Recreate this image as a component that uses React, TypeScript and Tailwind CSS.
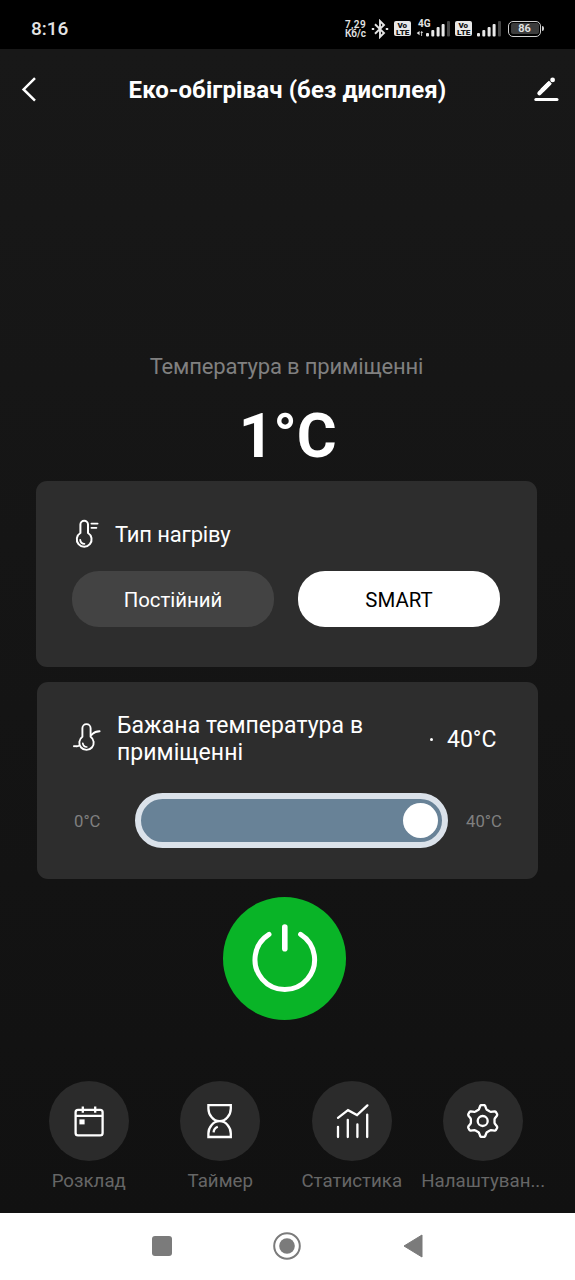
import React from 'react';

interface IconProps {
  className?: string;
}

const BackIcon: React.FC<IconProps> = ({ className = '' }) => (
  <svg viewBox="0 0 16 26" className={className} fill="none" stroke="white" strokeWidth="2.5">
    <path d="M14 1.2 2.6 12.4 14 23.6" />
  </svg>
);

const EditIcon: React.FC<IconProps> = ({ className = '' }) => (
  <svg viewBox="0 0 26 26" className={className} fill="none" stroke="white" strokeLinecap="round">
    <path d="M5.4 16.2 14.8 6.8" strokeWidth="4.2" />
    <path d="M8 13.6 16.4 5.2" strokeWidth="4.2" strokeLinecap="butt" />
    <circle cx="18.6" cy="2.9" r="2.4" fill="white" stroke="none" />
    <path d="M1.8 22.5H23" strokeWidth="3" />
  </svg>
);

const BluetoothIcon: React.FC<IconProps> = ({ className = '' }) => (
  <svg viewBox="0 0 18 20" className={className} fill="none" stroke="#e4e4e4" strokeWidth="1.9">
    <path d="M4 5.2 13 14 9 18V2L13 6 4 14.8" />
    <path d="M.8 10H3.2M14.8 10H17.2" strokeWidth="2.2" />
  </svg>
);

const VolteBadge: React.FC = () => (
  <svg viewBox="0 0 17 15" className="h-[15px] w-[17px] shrink-0">
    <rect width="17" height="15" rx="2" fill="#e8e8e8" />
    <text x="3.4" y="7" fontSize="8" fontWeight="900" fill="#111">Vo</text>
    <text x="2" y="13.8" fontSize="7.8" fontWeight="900" fill="#111" textLength="13.4" lengthAdjust="spacingAndGlyphs">LTE</text>
  </svg>
);

const SignalBars: React.FC<IconProps> = ({ className = '' }) => (
  <svg viewBox="0 0 24 16" className={className}>
    <g fill="#e8e8e8">
      <rect x="0" y="12" width="3" height="3.5" rx="1" />
      <rect x="5.3" y="9" width="3" height="6.5" rx="1" />
      <rect x="10.6" y="6" width="3" height="9.5" rx="1" />
      <rect x="15.6" y="3" width="3" height="12.5" rx="1" />
    </g>
    <rect x="21" y="0" width="3" height="15.5" rx="1" fill="#454545" />
  </svg>
);

const HeatTypeIcon: React.FC<IconProps> = ({ className = '' }) => (
  <svg viewBox="0 0 24 30" className={className} fill="none" stroke="white" strokeWidth="2" strokeLinecap="round">
    <path d="M5.4 5.6a3.8 3.8 0 0 1 7.6 0V14a7.4 7.4 0 1 1-7.6 0Z" strokeLinejoin="round" />
    <path d="M5.2 20.8a4.4 4.4 0 0 0 4.2 4" strokeWidth="1.8" />
    <path d="M16.4 4.6H22.6M16.4 8.8H21.4" strokeWidth="1.8" />
  </svg>
);

const TargetTempIcon: React.FC<IconProps> = ({ className = '' }) => (
  <svg viewBox="0 0 28 30" className={className} fill="none" stroke="white" strokeWidth="1.9" strokeLinecap="round">
    <path d="M9.4 5.2a4.1 4.1 0 0 1 8.2 0V13.8a7.2 7.2 0 1 1-8.2 0Z" strokeLinejoin="round" />
    <path d="M9.8 20.4a4.2 4.2 0 0 0 4 3.6" strokeWidth="1.7" />
    <path d="M1 23.2C3 22.8 4.8 24 6.6 22.4M18.4 12C20.4 10.4 20.6 8.4 26.6 8.2" />
  </svg>
);

const PowerIcon: React.FC<IconProps> = ({ className = '' }) => (
  <svg viewBox="0 0 70 70" className={className} fill="none" stroke="white" strokeWidth="5" strokeLinecap="round">
    <path d="M19 10.4A29.8 29.8 0 1 0 50.6 10.4" />
    <path d="M34.8 3V24.8" strokeWidth="5.6" />
  </svg>
);

const CalendarIcon: React.FC = () => (
  <svg viewBox="0 0 36 36" className="size-9" fill="none" stroke="white" strokeWidth="2.3">
    <rect x="4.6" y="6.8" width="27" height="25.6" rx="2.4" />
    <path d="M4.4 12.8H32M11.8 3.6V9.8M24.2 3.6V9.8" />
    <rect x="8.4" y="16.4" width="5.2" height="5" fill="white" stroke="none" />
  </svg>
);

const HourglassIcon: React.FC = () => (
  <svg viewBox="0 0 36 36" className="size-9" fill="none" stroke="white" strokeWidth="2.3">
    <path d="M6.4 2.2H28.8V5.4C28.8 12 23.8 18.2 17.6 18.2S6.4 12 6.4 5.4ZM6.4 34H28.8V30.4C28.8 24 23.8 18.2 17.6 18.2S6.4 24 6.4 30.4Z" />
    <path d="M11.6 29.4C11.8 26.6 13.2 24.8 15.8 23.8" />
  </svg>
);

const StatsIcon: React.FC = () => (
  <svg viewBox="0 0 36 36" className="size-9" fill="none" stroke="white" strokeWidth="2.3" strokeLinecap="round">
    <path d="M4 14.8 14 7.2 23 12 33.4 2.4" />
    <path d="M4 23.8V34M13.8 16.8V34M23.4 21.4V34M33.2 11.6V34" />
  </svg>
);

// one gear tooth as [degrees, radius], repeated six times
const tooth = [
  [-23, 11.9],
  [-18, 12.3],
  [-13, 13.8],
  [-9, 15.4],
  [-5, 16],
  [5, 16],
  [9, 15.4],
  [13, 13.8],
  [18, 12.3],
  [23, 11.9],
];

const gearPoints = Array.from({ length: 6 }, (_, i) =>
  tooth.map(([deg, r]) => {
    const a = ((deg + i * 60) * Math.PI) / 180;
    return `${(17.7 + r * Math.sin(a)).toFixed(2)},${(18 - r * Math.cos(a)).toFixed(2)}`;
  })
)
  .flat()
  .join(' ');

const SettingsIcon: React.FC = () => (
  <svg viewBox="0 0 36 36" className="size-9" fill="none" stroke="white" strokeWidth="2.3" strokeLinejoin="round">
    <polygon points={gearPoints} />
    <circle cx="17.7" cy="18" r="5" />
  </svg>
);

const actions = [
  { label: 'Розклад', Icon: CalendarIcon },
  { label: 'Таймер', Icon: HourglassIcon },
  { label: 'Статистика', Icon: StatsIcon },
  { label: 'Налаштуван...', Icon: SettingsIcon },
];

const StatusBar: React.FC = () => (
  <div className="flex h-[49px] items-center bg-black pt-2 pr-[34px] pl-[31px] text-[#e4e4e4]">
    <span className="text-[19px] leading-none font-medium">8:16</span>
    <div className="ml-auto flex items-center">
      <div className="mr-[4px] w-[22px] text-[10px] leading-[9px] font-semibold whitespace-nowrap">
        <div className="tracking-[0.4px]">7,29</div>
        <div>Кб/с</div>
      </div>
      <BluetoothIcon className="mr-[5px] h-[20px] w-[18px]" />
      <VolteBadge />
      <div className="ml-[5px] flex h-[17px] items-end">
        <div className="relative z-10 -mr-[7px] h-[17px] w-[17px]">
          <span className="block pl-[2px] text-[10px] leading-[8px] font-bold">4G</span>
          <svg viewBox="0 0 8 6" className="mt-[3px] h-[5px] w-[8px]" fill="#e4e4e4">
            <path d="M0 2.5 3.5 0V5ZM8 2 6 0 4.5 2H5.5V6H6.5V2Z" />
          </svg>
        </div>
        <SignalBars className="h-[16px] w-[24px]" />
      </div>
      <div className="w-[5px]" />
      <VolteBadge />
      <SignalBars className="mr-[7px] ml-[5px] h-[16px] w-[24px]" />
      <div className="flex h-[16px] w-[33px] items-center justify-center rounded-[5px] border-[1.5px] border-[#cfcfcf] p-[1.5px]">
        <div className="flex h-full w-full items-center justify-center rounded-[2px] bg-[#3c3c3c] text-[11px] leading-none font-semibold">
          86
        </div>
      </div>
      <div className="-mr-[3px] ml-px h-[5px] w-[2px] rounded-r-full bg-[#cfcfcf]" />
    </div>
  </div>
);

const App: React.FC = () => {
  return (
    <div className="flex h-[1280px] w-[575px] flex-col overflow-hidden bg-[#141414] font-['Roboto','Noto_Sans',sans-serif] text-white">
      <StatusBar />

      <main className="flex h-[1164px] flex-col bg-linear-to-b from-[#181818] to-[#111111]">
        <header className="flex h-[81px] items-center justify-between pr-[15px] pl-[21px]">
          <BackIcon className="h-[26px] w-[16px]" />
          <h1 className="pl-[4px] text-[24px] leading-none font-bold tracking-[0.1px] whitespace-nowrap">
            Еко-обігрівач (без дисплея)
          </h1>
          <EditIcon className="size-[26px] overflow-visible" />
        </header>

        <section className="mt-[222px] flex h-[129px] flex-col items-center">
          <p className="pr-[2px] text-[22px] leading-[30px] tracking-[-0.17px] whitespace-nowrap text-[#808080]">
            Температура в приміщенні
          </p>
          <p className="mt-[17px] text-[61px] leading-[74px] font-bold tracking-[-0.4px]">1°C</p>
        </section>

        <section className="ml-[36px] h-[186px] w-[501px] rounded-[11px] bg-[#2d2d2d] px-[36px] pt-[36px]">
          <div className="flex h-[34px] items-center">
            <HeatTypeIcon className="ml-[3px] h-[30px] w-[24px]" />
            <h2 className="ml-[16px] pt-[2px] text-[22px] leading-none tracking-[-0.15px]">Тип нагріву</h2>
          </div>
          <div className="mt-[20px] flex gap-[24px]">
            <button className="h-[56px] w-[202px] rounded-[27px] bg-[#434343] pt-[2px] text-[20.4px]">Постійний</button>
            <button className="h-[56px] w-[202px] rounded-[27px] bg-white pt-[2px] text-[20.4px] text-black">SMART</button>
          </div>
        </section>

        <section className="mt-[15px] ml-[37px] h-[197px] w-[501px] rounded-[11px] bg-[#2d2d2d] px-[36px] pt-[30px]">
          <div className="flex h-[54px] items-center">
            <TargetTempIcon className="mb-[2px] h-[30px] w-[28px]" />
            <h2 className="ml-[16px] w-[270px] text-[23px] leading-[27px] tracking-[0.05px]">
              Бажана температура в приміщенні
            </h2>
            <span className="ml-[43px] size-[3px] rounded-full bg-white" />
            <span className="ml-[14px] text-[23px] leading-none">40°C</span>
          </div>
          <div className="mt-[27px] flex items-center text-[16.7px] leading-none text-[#808080]">
            <span className="w-[62px] pt-[3px] pl-px">0°C</span>
            <div className="flex h-[55px] w-[313px] items-center justify-end rounded-full border-6 border-[#dbe2ea] bg-[#688297] pr-[4px]">
              <div className="size-[35px] rounded-full bg-white" />
            </div>
            <span className="ml-[18px] pt-[3px]">40°C</span>
          </div>
        </section>

        <button className="mt-[18px] ml-[223px] flex size-[123px] shrink-0 items-center justify-center rounded-full bg-[#09b427]">
          <PowerIcon className="size-[70px]" />
        </button>

        <nav className="mt-[61px] ml-[23px] grid w-[526px] grid-cols-4">
          {actions.map(({ label, Icon }) => (
            <div key={label} className="flex flex-col items-center">
              <div className="flex size-20 items-center justify-center rounded-full bg-[#2b2b2b]">
                <Icon />
              </div>
              <span className="mt-[9px] text-[18.7px] leading-[22px] whitespace-nowrap text-[#666666]">{label}</span>
            </div>
          ))}
        </nav>
      </main>

      {/* Android navigation keys */}
      <footer className="flex h-[67px] items-center bg-white pb-px pl-[152px]">
        <div className="size-[20px] rounded-[3px] bg-[#7b7b7b]" />
        <svg viewBox="0 0 28 28" className="ml-[101px] size-[28px]">
          <circle cx="14" cy="14" r="12.8" fill="none" stroke="#7b7b7b" strokeWidth="2" />
          <circle cx="14" cy="14" r="7.8" fill="#7b7b7b" />
        </svg>
        <svg viewBox="0 0 20 24" className="ml-[102px] h-[24px] w-[20px]">
          <path d="M1 12 19 1V23Z" fill="#7b7b7b" stroke="#7b7b7b" strokeLinejoin="round" />
        </svg>
      </footer>
    </div>
  );
};

export default App;
